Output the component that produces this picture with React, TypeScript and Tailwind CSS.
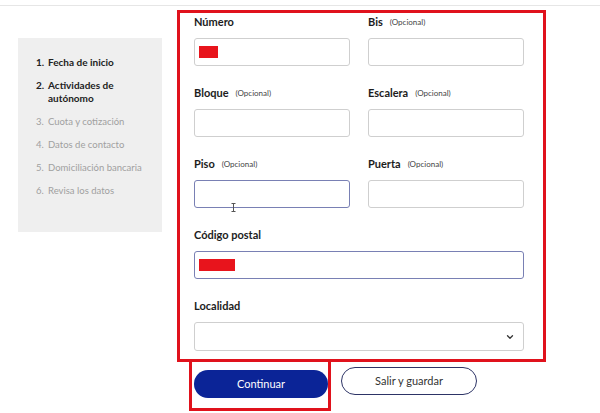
import { ChevronDown } from "lucide-react";

const STEPS = [
  { n: 1, label: "Fecha de inicio", done: true },
  { n: 2, label: "Actividades de autónomo", done: true },
  { n: 3, label: "Cuota y cotización", done: false },
  { n: 4, label: "Datos de contacto", done: false },
  { n: 5, label: "Domiciliación bancaria", done: false },
  { n: 6, label: "Revisa los datos", done: false },
];

function Label({ text, optional }: { text: string; optional?: boolean }) {
  return (
    <div className="flex h-4 items-center leading-4">
      <span className="text-[11px] font-bold text-[#1c1c1c]">{text}</span>
      {optional && <span className="ml-[7px] text-[8px] text-[#444]">(Opcional)</span>}
    </div>
  );
}

function Field({
  label,
  optional,
  focus,
  filled,
  cursor,
  className = "",
}: {
  label: string;
  optional?: boolean;
  focus?: boolean;
  filled?: number;
  cursor?: boolean;
  className?: string;
}) {
  return (
    <div className={className}>
      <Label text={label} optional={optional} />
      <div
        className={`relative mt-2 flex h-[28px] items-center rounded-[3px] border bg-white ${
          focus ? "border-[#7980b4] border-[1.5px]" : "border-[#cfcfcf]"
        }`}
      >
        {filled !== undefined && (
          <span className="ml-[4px] h-[12px] bg-[#e8141c]" style={{ width: filled }} />
        )}
        {cursor && (
          <svg className="absolute left-[36px] top-[22px]" width="5" height="9" viewBox="0 0 5 9">
            <path d="M0.5 0.5h4M2.5 0.5v8M0.5 8.5h4" stroke="#555" strokeWidth="1" fill="none" />
          </svg>
        )}
      </div>
    </div>
  );
}

export default function App() {
  return (
    <div className="h-[413px] w-[600px] overflow-hidden bg-white" style={{ fontFamily: "Lato, 'Open Sans', sans-serif" }}>
      <div className="h-[6px] border-b border-[#e6e6e6]" />
      <div className="flex">
        {/* steps */}
        <aside className="ml-[18px] mt-[32px] h-[194px] w-[144px] bg-[#efefef] pl-[18px] pr-2 pt-[18px]">
          <ol className="flex flex-col gap-[10px] leading-[13px]">
            {STEPS.map((s) => (
              <li
                key={s.n}
                className={`flex ${s.done ? "text-[10px] font-bold text-[#222]" : "text-[9.5px] text-[#a0a0a0]"}`}
              >
                <span className="w-[12px] shrink-0">{s.n}.</span>
                <span>{s.label}</span>
              </li>
            ))}
          </ol>
        </aside>

        <div className="ml-[15px]">
          {/* address form */}
          <div className="mt-[4px] w-[369px] border-[3px] border-[#e0121c] pb-[8px] pl-[14px] pr-[19px] pt-[1px]">
            <div className="grid grid-cols-2 gap-x-[18px] gap-y-[19px]">
              <Field label="Número" filled={19} />
              <Field label="Bis" optional />
              <Field label="Bloque" optional />
              <Field label="Escalera" optional />
              <Field label="Piso" optional focus cursor />
              <Field label="Puerta" optional />
              <Field label="Código postal" focus filled={36} className="col-span-2" />
              <div className="col-span-2">
                <Label text="Localidad" />
                <div className="mt-2 flex h-[29px] items-center justify-end rounded-[3px] border border-[#cfcfcf] bg-white pr-[8px]">
                  <ChevronDown size={10} strokeWidth={3} className="text-[#333]" />
                </div>
              </div>
            </div>
          </div>

          <div className="flex items-start">
            <div className="-mt-[3px] ml-[12px] h-[52px] border-[3px] border-[#e0121c] pl-[2px] pt-[8px]">
              <button className="h-[28px] w-[134px] rounded-full bg-[#0b2497] text-[11px] text-white">
                Continuar
              </button>
            </div>
            <button className="ml-[10px] mt-[5px] h-[28px] w-[136px] rounded-full border-[1.5px] border-[#2d3466] bg-white text-[11px] text-[#333]">
              Salir y guardar
            </button>
          </div>
        </div>
      </div>
    </div>
  );
}
